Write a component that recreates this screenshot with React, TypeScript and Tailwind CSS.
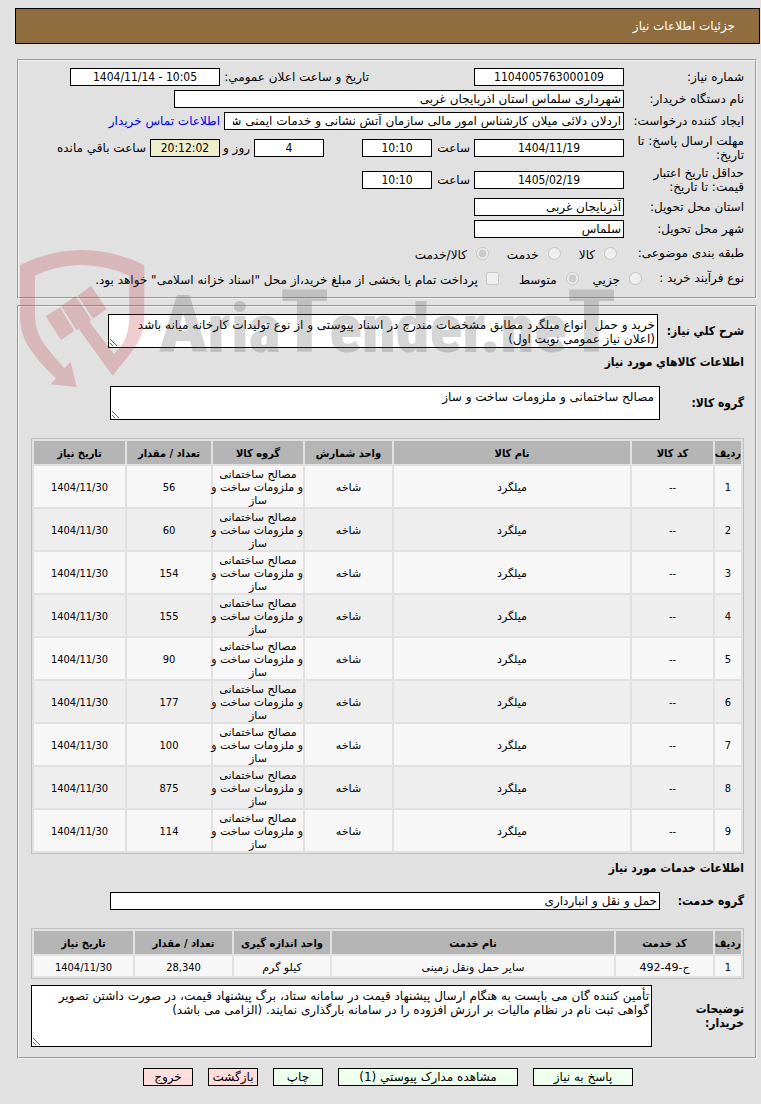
import React from "react";

const BOX = "h-[18px] border border-black bg-white px-[2px] leading-4";
const NUM = "text-center font-['DejaVu_Sans_Condensed',sans-serif]";
const AREA =
  "block overflow-hidden border border-black bg-white px-[2px] py-[3px] leading-[14px] resize";
const PANEL =
  "mr-1 ml-[17px] border-2 border-[#f0f0f0] [border-style:groove] pr-[11px] pl-3";
const BOLD = "font-bold font-['DejaVu_Sans_Condensed',sans-serif]";

type Column = { title: string; width: string };

const goodsColumns: Column[] = [
  { title: "ردیف", width: "w-[28px]" },
  { title: "کد کالا", width: "w-[83px]" },
  { title: "نام کالا", width: "" },
  { title: "واحد شمارش", width: "w-[89px]" },
  { title: "گروه کالا", width: "w-[92px]" },
  { title: "تعداد / مقدار", width: "w-[86px]" },
  { title: "تاریخ نیاز", width: "w-[91px]" },
];

const serviceColumns: Column[] = [
  { title: "ردیف", width: "w-[28px]" },
  { title: "کد خدمت", width: "w-[99px]" },
  { title: "نام خدمت", width: "" },
  { title: "واحد اندازه گیری", width: "w-[98px]" },
  { title: "تعداد / مقدار", width: "w-[99px]" },
  { title: "تاریخ نیاز", width: "w-[99px]" },
];

const quantities = ["56", "60", "154", "155", "90", "177", "100", "875", "114"];

const goodsRows = quantities.map((quantity, i) => [
  String(i + 1),
  "--",
  "میلگرد",
  "شاخه",
  "مصالح ساختمانی\nو ملزومات ساخت و\nساز",
  quantity,
  "1404/11/30",
]);

const serviceRows = [["1", "ح-49-492", "سایر حمل ونقل زمینی", "کیلو گرم", "28,340", "1404/11/30"]];

function DataTable({ columns, rows, label }: { columns: Column[]; rows: string[][]; label: string }) {
  return (
    <div className="border border-[#bfbfbf] p-[2px]">
      <table aria-label={label} className="w-full table-fixed border-separate border-spacing-0 text-[11px] leading-[13px]">
        <thead>
          <tr>
            {columns.map((c) => (
              <th
                key={c.title}
                scope="col"
                className={`h-[25px] border-b-2 border-[#e1e1e1] bg-[#b5b5b5] px-0 pt-[2px] pb-0 text-center not-last:border-l-2 ${BOLD} whitespace-nowrap ${c.width}`}
              >
                {c.title}
              </th>
            ))}
          </tr>
        </thead>
        <tbody>
          {rows.map((row) => (
            <tr key={row[0]} className="odd:bg-[#f7f7f7] even:bg-[#eee] last:[&>td]:border-b-0">
              {row.map((cell, i) => (
                <td
                  key={i}
                  className={`h-5 border-b-2 border-[#e1e1e1] px-0 pt-[2px] pb-0 text-center whitespace-pre not-last:border-l-2 ${
                    /[\u0600-\u06ff]/.test(cell) ? "" : "font-['DejaVu_Sans_Condensed',sans-serif]"
                  }`}
                >
                  {cell}
                </td>
              ))}
            </tr>
          ))}
        </tbody>
      </table>
    </div>
  );
}

function Row({ label, htmlFor, children }: { label: string; htmlFor: string; children: React.ReactNode }) {
  return (
    <div className="flex items-center py-[2px] leading-[14px]">
      <label htmlFor={htmlFor} className="w-[120px] shrink-0">
        {label}
      </label>
      {children}
    </div>
  );
}

function Choice({ name, label, checked = false }: { name: string; label: string; checked?: boolean }) {
  return (
    <label className="flex items-center gap-[9px]">
      <input type="radio" name={name} disabled defaultChecked={checked} className="m-0 size-[13px]" />
      <span className="pt-1">{label}</span>
    </label>
  );
}

function Watermark() {
  return (
    <div aria-hidden="true" dir="ltr" className="pointer-events-none absolute top-[250px] left-5 flex opacity-[0.23]">
      <svg className="h-[137px] w-[125px] shrink-0" viewBox="30 30 375 411" fill="#b9323c">
        <path d="M30 75Q120 30 215 30Q310 30 403 75V225C403 272 390 304 366 334L308 407L207 268L199 270L153 198L197 168L243 238L240 248L312 343L338 312Q358 277 358 225V107Q290 75 215 75Q140 75 75 107V230Q76 276 103 313Q130 350 163 385L182 365L200 441L122 433L138 415Q84 365 52 314Q30 275 30 230Z" />
        <path d="M107 229L150 202L193 272L153 300Z" />
        <path d="M203 167L243 137L290 207L249 236Z" />
      </svg>
      <span className="pt-[28px] pl-[14px] font-['Roboto_Condensed',Roboto,sans-serif] text-[68px] leading-[88px] font-black whitespace-nowrap text-[#505050]">
        <span className="text-[80px]">A</span>ria<span className="text-[88px]">T</span>ender.ne
        <span className="text-[88px]">T</span>
      </span>
    </div>
  );
}

export default function App() {
  return (
    <div
      dir="rtl"
      lang="fa"
      className="relative min-h-screen bg-[#e1e1e1] pt-2 pb-4 font-['DejaVu_Sans',sans-serif] text-[12px] leading-[14px] text-black"
    >
      <h1 className="mr-px mb-[15px] ml-[15px] flex h-9 items-center border border-black bg-[#8f6d3f] pr-6 text-white">
        جزئیات اطلاعات نیاز
      </h1>

      <form onSubmit={(e) => e.preventDefault()}>
        <section className={`${PANEL} py-[5px]`}>
          <Row label="شماره نیاز:" htmlFor="number">
            <input id="number" readOnly defaultValue="1104005763000109" className={`${BOX} ${NUM} w-[150px]`} />
            <label htmlFor="announced" className="mr-[105px] w-[149px] whitespace-nowrap">
              تاریخ و ساعت اعلان عمومي:
            </label>
            <input id="announced" dir="ltr" readOnly defaultValue="1404/11/14 - 10:05" className={`${BOX} ${NUM} w-[150px]`} />
          </Row>
          <Row label="نام دستگاه خریدار:" htmlFor="buyer">
            <input id="buyer" readOnly defaultValue="شهرداری سلماس استان اذربایجان غربی" className={`${BOX} w-[450px]`} />
          </Row>
          <Row label="ایجاد کننده درخواست:" htmlFor="creator">
            <input
              id="creator"
              readOnly
              defaultValue="اردلان دلائی میلان کارشناس امور مالی سازمان آتش نشانی و خدمات ایمنی شهرداری سلماس"
              className="h-[18px] w-[400px] border border-black bg-white pr-[2px] pl-2 leading-4"
            />
            <a href="#contact" className="mr-1 whitespace-nowrap text-[#0000ee]">
              اطلاعات تماس خریدار
            </a>
          </Row>
          <Row label="مهلت ارسال پاسخ: تا تاریخ:" htmlFor="deadline">
            <input id="deadline" readOnly defaultValue="1404/11/19" className={`${BOX} ${NUM} w-[150px]`} />
            <label htmlFor="deadline-time" className="w-[42px] px-1">
              ساعت
            </label>
            <input id="deadline-time" readOnly defaultValue="10:10" className={`${BOX} ${NUM} w-[70px]`} />
            <input id="days" readOnly defaultValue="4" className={`${BOX} ${NUM} mr-[38px] w-[70px]`} />
            <label htmlFor="days" className="w-[34px] pr-1 whitespace-nowrap">
              روز و
            </label>
            <input
              id="remaining"
              readOnly
              defaultValue="20:12:02"
              className={`h-[18px] w-[70px] border border-black bg-[#eeeecc] px-[2px] leading-4 ${NUM}`}
            />
            <label htmlFor="remaining" className="mr-1 whitespace-nowrap">
              ساعت باقي مانده
            </label>
          </Row>
          <Row label="حداقل تاریخ اعتبار قیمت: تا تاریخ:" htmlFor="validity">
            <input id="validity" readOnly defaultValue="1405/02/19" className={`${BOX} ${NUM} w-[150px]`} />
            <label htmlFor="validity-time" className="w-[42px] px-1">
              ساعت
            </label>
            <input id="validity-time" readOnly defaultValue="10:10" className={`${BOX} ${NUM} w-[70px]`} />
          </Row>
          <Row label="استان محل تحویل:" htmlFor="province">
            <input id="province" readOnly defaultValue="آذربایجان غربی" className={`${BOX} w-[150px]`} />
          </Row>
          <Row label="شهر محل تحویل:" htmlFor="city">
            <input id="city" readOnly defaultValue="سلماس" className={`${BOX} w-[150px]`} />
          </Row>
          <div role="radiogroup" aria-label="طبقه بندی موضوعی" className="flex h-[26px] items-center gap-[18px]">
            <span className="w-[109px]">طبقه بندی موضوعی:</span>
            <Choice name="subject" label="کالا" />
            <Choice name="subject" label="خدمت" />
            <Choice name="subject" label="کالا/خدمت" checked />
          </div>
          <div className="mb-[2px] flex h-6 items-center gap-5">
            <div role="radiogroup" aria-label="نوع فرآیند خرید" className="flex items-center gap-[14px]">
              <span className="w-[88px] whitespace-nowrap">نوع فرآیند خرید :</span>
              <Choice name="process" label="جزیي" />
              <Choice name="process" label="متوسط" checked />
            </div>
            <label className="flex items-center gap-2 whitespace-nowrap">
              <input type="checkbox" disabled className="m-0 size-[13px]" />
              <span className="pt-1">پرداخت تمام یا بخشی از مبلغ خرید،از محل "اسناد خزانه اسلامی" خواهد بود.</span>
            </label>
          </div>
        </section>

        <section className={`${PANEL} mt-[6px] pt-[7px] pb-[10px]`}>
          <div className="flex items-center">
            <label htmlFor="summary" className={`w-[86px] shrink-0 ${BOLD}`}>
              شرح کلي نیاز:
            </label>
            <textarea
              id="summary"
              readOnly
              defaultValue={
                "خرید و حمل  انواع میلگرد مطابق مشخصات مندرج در اسناد پیوستی و از نوع تولیدات کارخانه میانه باشد\n(اعلان نیاز عمومی نوبت اول)"
              }
              className={`${AREA} h-[34px] w-[550px]`}
            />
          </div>
          <h2 className={`mt-[7px] ${BOLD}`}>اطلاعات کالاهاي مورد نیاز</h2>
          <div className="mt-[17px] flex items-center">
            <label htmlFor="goods-group" className={`w-[84px] shrink-0 ${BOLD}`}>
              گروه کالا:
            </label>
            <textarea
              id="goods-group"
              readOnly
              defaultValue="مصالح ساختمانی و ملزومات ساخت و ساز"
              className={`${AREA} h-[34px] w-[550px] pr-[5px]`}
            />
          </div>
          <div className="mt-[18px]">
            <DataTable label="اطلاعات کالاهاي مورد نیاز" columns={goodsColumns} rows={goodsRows} />
          </div>
          <h2 className={`mt-[7px] ${BOLD}`}>اطلاعات خدمات مورد نیاز</h2>
          <div className="mt-[17px] flex items-center">
            <label htmlFor="service-group" className={`w-[84px] shrink-0 ${BOLD}`}>
              گروه خدمت:
            </label>
            <input id="service-group" readOnly defaultValue="حمل و نقل و انبارداری" className={`${BOX} w-[550px]`} />
          </div>
          <div className="mt-[18px]">
            <DataTable label="اطلاعات خدمات مورد نیاز" columns={serviceColumns} rows={serviceRows} />
          </div>
          <div className="mt-[6px] flex items-center">
            <label htmlFor="notes" className={`w-[92px] shrink-0 pl-4 ${BOLD}`}>
              توضیحات خریدار:
            </label>
            <textarea
              id="notes"
              readOnly
              defaultValue={
                "تأمین کننده گان می بایست به هنگام ارسال پیشنهاد قیمت در سامانه ستاد، برگ پیشنهاد قیمت، در صورت داشتن تصویر گواهی ثبت نام در نظام مالیات بر ارزش افزوده را در سامانه بارگذاری نمایند. (الزامی می باشد)"
              }
              className={`${AREA} h-[62px] flex-1`}
            />
          </div>
        </section>

        <div className="mt-[9px] mr-[2px] ml-[17px] flex justify-center gap-[15px]">
          <button type="button" className="h-[18px] w-[100px] border border-black bg-[#eeffee] leading-4">
            پاسخ به نیاز
          </button>
          <button type="button" className="h-[18px] w-[180px] border border-black bg-[#eeffee] leading-4">
            مشاهده مدارک پیوستي (1)
          </button>
          <button type="button" className="h-[18px] w-[50px] border border-black bg-[#eeffee] leading-4">
            چاپ
          </button>
          <button type="button" className="h-[18px] w-[50px] border border-black bg-[#ffdddd] leading-4">
            بازگشت
          </button>
          <button type="button" className="h-[18px] w-[50px] border border-black bg-[#ffdddd] leading-4">
            خروج
          </button>
        </div>
      </form>
      <Watermark />
    </div>
  );
}
